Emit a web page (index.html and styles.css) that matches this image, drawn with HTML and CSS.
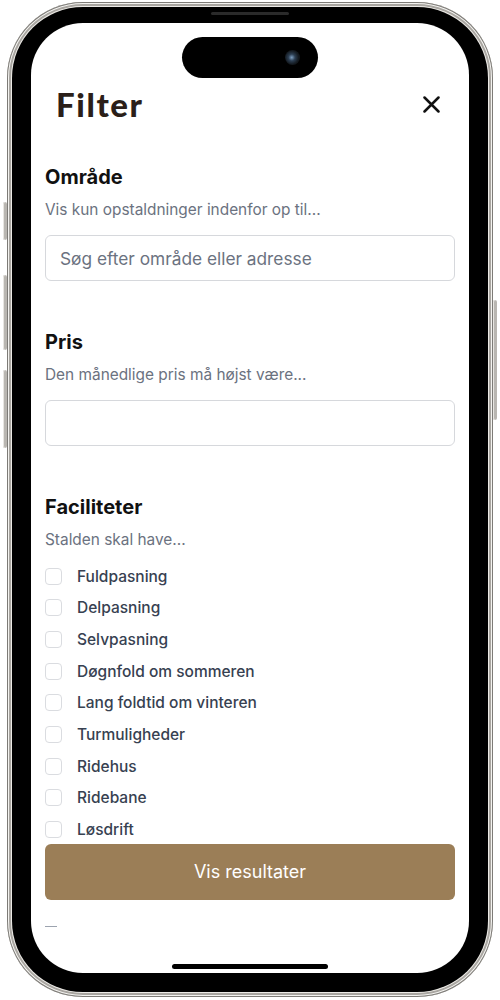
FILE: index.html
```html
<!DOCTYPE html>
<html lang="da">
<head>
  <meta charset="UTF-8">
  <meta name="viewport" content="width=device-width, initial-scale=1.0">
  <title>Filter</title>
  <link rel="stylesheet" href="styles.css">
</head>
<body>

  <div class="phone">
    <!-- side buttons -->
    <span class="side-btn action"></span>
    <span class="side-btn vol-up"></span>
    <span class="side-btn vol-down"></span>
    <span class="side-btn power"></span>

    <div class="bezel">
      <span class="speaker"></span>

      <div class="screen">
        <div class="island"><span class="camera"></span></div>

        <div class="filter-header">
          <h1>Filter</h1>
          <button class="close-button" aria-label="Luk">
            <svg width="17" height="17" viewBox="0 0 17 17">
              <path d="M1.5 1.5 L15.5 15.5 M15.5 1.5 L1.5 15.5" stroke="#111" stroke-width="2.5" stroke-linecap="round"/>
            </svg>
          </button>
        </div>

        <!-- Område -->
        <div class="section first">
          <h2>Område</h2>
          <p class="hint">Vis kun opstaldninger indenfor op til...</p>
          <input class="text-input" type="text" placeholder="Søg efter område eller adresse">
        </div>

        <!-- Pris -->
        <div class="section">
          <h2>Pris</h2>
          <p class="hint">Den månedlige pris må højst være...</p>
          <input class="text-input" type="text">
        </div>

        <!-- Faciliteter -->
        <div class="section">
          <h2>Faciliteter</h2>
          <p class="hint">Stalden skal have...</p>
          <div class="checklist">
            <label class="check-row"><span class="box"></span>Fuldpasning</label>
            <label class="check-row"><span class="box"></span>Delpasning</label>
            <label class="check-row"><span class="box"></span>Selvpasning</label>
            <label class="check-row"><span class="box"></span>Døgnfold om sommeren</label>
            <label class="check-row"><span class="box"></span>Lang foldtid om vinteren</label>
            <label class="check-row"><span class="box"></span>Turmuligheder</label>
            <label class="check-row"><span class="box"></span>Ridehus</label>
            <label class="check-row"><span class="box"></span>Ridebane</label>
            <label class="check-row"><span class="box"></span>Løsdrift</label>
          </div>
        </div>

        <button class="results-button">Vis resultater</button>
        <div class="dash"></div>

        <span class="home-bar"></span>
      </div>
    </div>
  </div>

</body>
</html>
```

FILE: styles.css
```css
/* Page */
body {
  margin: 0;
  background-color: #fff;
  font-family: Inter, "Noto Sans", sans-serif;
}

/* Phone frame */
.phone {
  position: relative;
  width: 486px;
  height: 995px;
  margin: 2px 0 0 7px;
  padding: 5px;
  box-sizing: border-box;
  border-radius: 76px;
  background: #c8c5c0;
  box-shadow: inset 0 0 0 1px #7d7b77, inset 0 0 0 2px #f4f3f0, inset 0 0 0 4px #a9a6a1;
}

.side-btn {
  position: absolute;
  width: 4px;
  background: #b9b6b1;
  border-radius: 2px;
  box-shadow: inset 1px 0 0 #e8e6e2;
}

.side-btn.action { left: -4px; top: 200px; height: 38px; }
.side-btn.vol-up { left: -4px; top: 273px; height: 75px; }
.side-btn.vol-down { left: -4px; top: 368px; height: 78px; }
.side-btn.power { right: -4px; top: 298px; height: 120px; }

.bezel {
  position: relative;
  height: 100%;
  padding: 16px 19px 19px;
  box-sizing: border-box;
  border-radius: 71px;
  background-color: #000;
  box-shadow: 0 0 0 1px #eceae6;
}

.speaker {
  position: absolute;
  left: 199px;
  top: 5px;
  width: 78px;
  height: 3px;
  border-radius: 2px;
  background: #2a2a2a;
}

.screen {
  position: relative;
  height: 100%;
  padding: 61px 14px 0;
  box-sizing: border-box;
  border-radius: 52px;
  background-color: #fff;
  overflow: hidden;
}

.island {
  position: absolute;
  left: 151px;
  top: 14px;
  width: 136px;
  height: 41px;
  border-radius: 21px;
  background: #000;
}

.camera {
  position: absolute;
  right: 18px;
  top: 13px;
  width: 15px;
  height: 15px;
  border-radius: 50%;
  background: radial-gradient(circle at 45% 50%, #7d9ec0 0%, #2c3e52 30%, #141a20 60%, #0a0a0a 100%);
}

.home-bar {
  position: absolute;
  left: 141px;
  bottom: 4px;
  width: 156px;
  height: 5px;
  border-radius: 3px;
  background: #000;
}

/* Header */
.filter-header {
  display: flex;
  justify-content: space-between;
  align-items: center;
  padding: 0 15px 0 11px;
  height: 40px;
}

.filter-header h1 {
  margin: 0;
  font-family: Lato, Inter, sans-serif;
  font-weight: 900;
  font-size: 33px;
  line-height: 40px;
  letter-spacing: 1.6px;
  color: #2b1f19;
}

.close-button {
  display: flex;
  padding: 0;
  border: none;
  background: none;
}

/* Sections */
.section {
  margin-top: 49px;
}

.section.first {
  margin-top: 41px;
}

.section h2 {
  margin: 0;
  font-size: 20px;
  line-height: 24px;
  font-weight: 700;
  color: #111;
}

.hint {
  margin: 11px 0 0;
  font-size: 15.4px;
  line-height: 20px;
  color: #6b7280;
}

.text-input {
  display: block;
  width: 100%;
  height: 46px;
  margin-top: 15px;
  padding: 0 14px;
  box-sizing: border-box;
  border: 1px solid #d6d8dc;
  border-radius: 6px;
  font-family: inherit;
  font-size: 17.3px;
  color: #111;
  outline: none;
}

.text-input::placeholder {
  color: #6b7280;
}

/* Checkboxes */
.checklist {
  display: flex;
  flex-direction: column;
  gap: 14.7px;
  margin-top: 17.5px;
}

.check-row {
  display: flex;
  align-items: center;
  gap: 15px;
  height: 17px;
  font-size: 15.5px;
  font-weight: 500;
  line-height: 17px;
  color: #374151;
}

.box {
  width: 15px;
  height: 15px;
  border: 1px solid #dadce0;
  border-radius: 4px;
  background: #fff;
  flex-shrink: 0;
}

/* Submit */
.results-button {
  display: block;
  width: 100%;
  height: 56px;
  margin-top: 5.5px;
  border: none;
  border-radius: 6px;
  background-color: #9b7e57;
  color: #fff;
  font-family: inherit;
  font-size: 18px;
}

.dash {
  width: 12px;
  height: 1.5px;
  margin-top: 26px;
  background: #9ca3af;
}
```
